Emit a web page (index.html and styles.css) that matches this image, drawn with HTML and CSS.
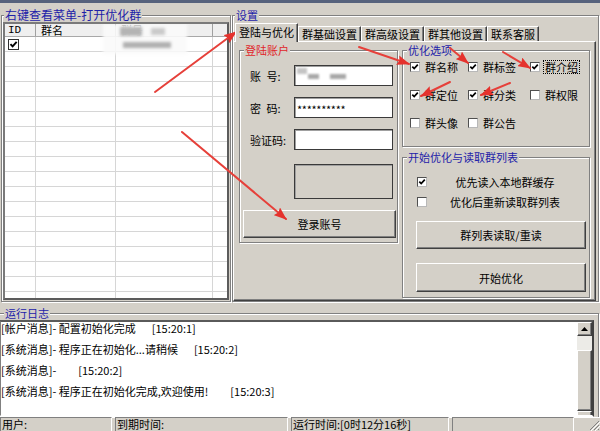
FILE: index.html
```html
<!DOCTYPE html>
<html lang="zh-CN">
<head>
<meta charset="utf-8">
<title>群优化</title>
<link rel="stylesheet" href="styles.css">
</head>
<body>
<div class="app">
  <div class="main">
    <fieldset class="grp left">
      <legend class="lg-big">右键查看菜单-打开优化群</legend>
      <div class="list">
        <div class="lhead">
          <div class="hc mono">ID</div><div class="hc">群名</div><div class="hc">群号</div><div class="hc last"></div>
        </div>
        <div class="lbody">
          <div class="row"><div class="c"><span class="cb big on"><svg viewBox="0 0 8 8"><path d="M1.3 3.6 L3.2 5.6 L6.8 1.6"/></svg></span></div><div class="c"></div><div class="c"></div><div class="c"></div></div>
          <div class="row"><div class="c"></div><div class="c"></div><div class="c"></div><div class="c"></div></div>
          <div class="row"><div class="c"></div><div class="c"></div><div class="c"></div><div class="c"></div></div>
          <div class="row"><div class="c"></div><div class="c"></div><div class="c"></div><div class="c"></div></div>
          <div class="row"><div class="c"></div><div class="c"></div><div class="c"></div><div class="c"></div></div>
          <div class="row"><div class="c"></div><div class="c"></div><div class="c"></div><div class="c"></div></div>
          <div class="row"><div class="c"></div><div class="c"></div><div class="c"></div><div class="c"></div></div>
          <div class="row"><div class="c"></div><div class="c"></div><div class="c"></div><div class="c"></div></div>
          <div class="row"><div class="c"></div><div class="c"></div><div class="c"></div><div class="c"></div></div>
          <div class="row"><div class="c"></div><div class="c"></div><div class="c"></div><div class="c"></div></div>
          <div class="row"><div class="c"></div><div class="c"></div><div class="c"></div><div class="c"></div></div>
          <div class="row"><div class="c"></div><div class="c"></div><div class="c"></div><div class="c"></div></div>
          <div class="row"><div class="c"></div><div class="c"></div><div class="c"></div><div class="c"></div></div>
          <div class="row"><div class="c"></div><div class="c"></div><div class="c"></div><div class="c"></div></div>
          <div class="row"><div class="c"></div><div class="c"></div><div class="c"></div><div class="c"></div></div>
          <div class="row"><div class="c"></div><div class="c"></div><div class="c"></div><div class="c"></div></div>
          <div class="row"><div class="c"></div><div class="c"></div><div class="c"></div><div class="c"></div></div>
          <div class="row"><div class="c"></div><div class="c"></div><div class="c"></div><div class="c"></div></div>
        </div>
        <div class="blur-a"><i class="b1"></i><i class="b2"></i><i class="b3"></i></div>
      </div>
    </fieldset>

    <fieldset class="grp right">
      <legend>设置</legend>
      <div class="tabs">
        <div class="tab active">登陆与优化</div>
        <div class="tab">群基础设置</div>
        <div class="tab">群高级设置</div>
        <div class="tab">群其他设置</div>
        <div class="tab">联系客服</div>
      </div>
      <div class="panel">
        <fieldset class="grp login">
          <legend class="red">登陆账户</legend>
          <div class="frow"><span class="lbl">账&ensp;号:</span><div class="inp"><div class="blur-b"><i class="b1"></i><i class="b2"></i><i class="b3"></i></div></div></div>
          <div class="frow"><span class="lbl">密&ensp;码:</span><div class="inp pw">**********</div></div>
          <div class="frow last"><span class="lbl">验证码:</span><div class="inp"></div></div>
          <div class="captcha"></div>
          <div class="btn login-btn">登录账号</div>
        </fieldset>

        <div class="rcol">
          <fieldset class="grp opts">
            <legend>优化选项</legend>
            <div class="ogrid">
              <div class="ck"><span class="cb on"><svg viewBox="0 0 8 8"><path d="M1.3 3.6 L3.2 5.6 L6.8 1.6"/></svg></span><span>群名称</span></div>
              <div class="ck"><span class="cb on"><svg viewBox="0 0 8 8"><path d="M1.3 3.6 L3.2 5.6 L6.8 1.6"/></svg></span><span>群标签</span></div>
              <div class="ck"><span class="cb on"><svg viewBox="0 0 8 8"><path d="M1.3 3.6 L3.2 5.6 L6.8 1.6"/></svg></span><span class="focus">群介绍</span></div>
              <div class="ck"><span class="cb on"><svg viewBox="0 0 8 8"><path d="M1.3 3.6 L3.2 5.6 L6.8 1.6"/></svg></span><span>群定位</span></div>
              <div class="ck"><span class="cb on"><svg viewBox="0 0 8 8"><path d="M1.3 3.6 L3.2 5.6 L6.8 1.6"/></svg></span><span>群分类</span></div>
              <div class="ck"><span class="cb"></span><span>群权限</span></div>
              <div class="ck"><span class="cb"></span><span>群头像</span></div>
              <div class="ck"><span class="cb"></span><span>群公告</span></div>
            </div>
          </fieldset>

          <fieldset class="grp start">
            <legend>开始优化与读取群列表</legend>
            <div class="ck2"><span class="cb on"><svg viewBox="0 0 8 8"><path d="M1.3 3.6 L3.2 5.6 L6.8 1.6"/></svg></span><span class="t">优先读入本地群缓存</span></div>
            <div class="ck2"><span class="cb"></span><span class="t">优化后重新读取群列表</span></div>
            <div class="btn wide b1">群列表读取/重读</div>
            <div class="btn wide b2">开始优化</div>
          </fieldset>
        </div>
      </div>
    </fieldset>
  </div>

  <fieldset class="grp log">
    <legend>运行日志</legend>
    <div class="logbox">
      <div class="lines">
        <div class="ln">[帐户消息]- 配置初始化完成<span class="ts">[15:20:1]</span></div>
        <div class="ln">[系统消息]- 程序正在初始化...请稍候<span class="ts">[15:20:2]</span></div>
        <div class="ln">[系统消息]-<span class="ts w">[15:20:2]</span></div>
        <div class="ln">[系统消息]- 程序正在初始化完成,欢迎使用!<span class="ts w">[15:20:3]</span></div>
      </div>
      <div class="sbar">
        <div class="sb-btn"><svg viewBox="0 0 7 4"><path d="M3.5 0 L7 4 L0 4 Z"/></svg></div>
        <div class="sb-track"></div>
        <div class="sb-thumb"></div>
        <div class="sb-btn"></div>
      </div>
    </div>
  </fieldset>

  <div class="status">
    <div class="sp s1">用户:</div>
    <div class="sp s2">到期时间:</div>
    <div class="sp s3">运行时间:[0时12分16秒]</div>
    <div class="sp s4"></div>
    <div class="sp grip"><svg viewBox="0 0 12 12"><path d="M11 2 L2 11 M11 6 L6 11 M11 10 L10 11" stroke="#808080"/><path d="M12 3 L3 12 M12 7 L7 12" stroke="#fff"/></svg></div>
  </div>
</div>

<svg class="arrows" viewBox="0 0 600 431" width="600" height="431">
  <defs>
    <marker id="ah" markerUnits="userSpaceOnUse" markerWidth="13" markerHeight="10" refX="12" refY="5" orient="auto">
      <path d="M0 0 L13 5 L0 10 L2 5 Z" fill="#e5322d"/>
    </marker>
  </defs>
  <g stroke="#e6403a" stroke-width="2" fill="none" marker-end="url(#ah)" stroke-linecap="round">
    <line x1="155" y1="92" x2="236" y2="32"/>
    <line x1="182" y1="132" x2="286" y2="219"/>
    <line x1="359" y1="47" x2="409" y2="64"/>
    <line x1="450" y1="48" x2="468" y2="63"/>
    <line x1="503" y1="52" x2="530" y2="68"/>
    <line x1="450" y1="82" x2="421" y2="96"/>
    <line x1="510" y1="83" x2="481" y2="95"/>
  </g>
</svg>
</body>
</html>
```

FILE: styles.css
```css
* { box-sizing: border-box; }
html, body { margin: 0; padding: 0; }
body {
  position: relative;
  width: 600px;
  height: 431px;
  overflow: hidden;
  background: #d4d0c8;
  font-family: "Noto Sans CJK SC", "Noto Sans", sans-serif;
  font-size: 11px;
  line-height: 12px;
  color: #000;
}
.app {
  width: 600px;
  height: 431px;
  display: flex;
  flex-direction: column;
  border-top: 3px solid #56627c;
  overflow: hidden;
}
.main { display: flex; height: 299px; flex: none; }

/* group boxes */
.grp {
  margin: 0;
  padding: 0;
  min-width: 0;
  border: 1px solid #808080;
  box-shadow: inset 1px 1px 0 #fff, 1px 1px 0 #fff;
}
.grp > legend {
  padding: 0 1px;
  height: 12px;
  line-height: 12px;
  font-size: 11px;
  color: #1e22a8;
  background: #d4d0c8;
  white-space: nowrap;
}
.grp > legend.red { color: #e0262a; }
.grp > legend.lg-big { font-size: 12px; }

/* left list group */
.left {
  margin: 6px 0 0 1px;
  width: 230px;
  height: 293px;
  padding: 1px;
}
.left > legend { margin-left: 1px; }
.list {
  position: relative;
  height: 278px;
  background: #fff;
  border: 2px solid;
  border-color: #7a7a7a #5c5c5c #5c5c5c #7a7a7a;
  overflow: hidden;
}
.lhead, .row {
  display: grid;
  grid-template-columns: 31px 80px 97px 1fr;
}
.lhead {
  height: 13px;
  background: #efefef;
  border-bottom: 1px solid #a8a8a8;
}
.hc {
  border-right: 1px solid #a0a0a0;
  padding-left: 5px;
  line-height: 12px;
}
.hc.mono { font-family: "Liberation Mono", monospace; padding-left: 3px; font-size: 11px; }
.hc.last { border-right: 0; }
.row { height: 15px; border-bottom: 1px solid #d6d6d6; }
.c { border-right: 1px solid #d6d6d6; }
.c:last-child { border-right: 0; }
.row .c:first-child { padding: 2px 0 0 3px; }

.blur-a {
  position: absolute;
  left: 98px;
  top: 0;
  width: 84px;
  height: 30px;
  background: rgba(250, 250, 250, 0.9);
  filter: blur(1.6px);
}
.blur-a i, .blur-b i { position: absolute; display: block; }
.blur-a .b1 { left: 17px; top: 3px; width: 22px; height: 9px; background: #b4b4b4; }
.blur-a .b2 { left: 48px; top: 4px; width: 14px; height: 7px; background: #cacaca; }
.blur-a .b3 { left: 20px; top: 18px; width: 48px; height: 6px; background: #b0b0b0; }

/* checkboxes */
.cb {
  display: inline-block;
  flex: none;
  width: 10px;
  height: 10px;
  background: #fff;
  border: 1px solid;
  border-color: #505050 #b8b8b8 #b8b8b8 #505050;
}
.cb.big { width: 11px; height: 11px; border-color: #303030; }
.cb svg { display: block; width: 100%; height: 100%; }
.cb svg path { fill: none; stroke: #000; stroke-width: 1.7; }

/* right settings group */
.right {
  margin: 6px 0 0 1px;
  width: 367px;
  height: 293px;
  padding: 2px 2px 0 0;
}
.right > legend { margin-left: 2px; }
.tabs {
  display: flex;
  align-items: flex-end;
  height: 18px;
  margin-left: 2px;
  position: relative;
  z-index: 1;
}
.tab {
  height: 15px;
  padding: 1px 3px 0;
  line-height: 12px;
  border: 1px solid;
  border-color: #fff #404040 transparent #fff;
  border-bottom: 0;
  box-shadow: inset -1px 0 0 #808080;
  background: #d4d0c8;
  white-space: nowrap;
}
.tab.active {
  height: 19px;
  margin-bottom: -1px;
  padding-top: 2px;
}
.panel {
  height: 260px;
  border: 1px solid;
  border-color: #fff #404040 #404040 #fff;
  box-shadow: inset -1px -1px 0 #808080;
  display: flex;
  align-items: flex-start;
  column-gap: 4px;
  padding: 0 5px;
}

/* login */
.login {
  margin-top: 2px;
  width: 159px;
  height: 199px;
  padding: 9px 1px 3px 3px;
  flex: none;
}
.login > legend { margin-left: 1px; }
.frow {
  display: flex;
  align-items: center;
  height: 21px;
  padding-left: 7px;
  margin-bottom: 11px;
}
.frow.last { margin-bottom: 14px; }
.lbl { width: 44px; flex: none; white-space: nowrap; }
.inp {
  position: relative;
  width: 99px;
  height: 21px;
  background: #fff;
  border: 1px solid #3a3a3a;
  box-shadow: inset 1px 1px 0 #a0a0a0;
  overflow: hidden;
}
.inp.pw { padding: 5px 0 0 2px; font-size: 11px; line-height: 12px; letter-spacing: -0.3px; }
.blur-b { position: absolute; inset: 0; filter: blur(1.2px); }
.blur-b .b1 { left: 2px; top: 2px; width: 10px; height: 6px; background: #c4c4c4; }
.blur-b .b2 { left: 13px; top: 8px; width: 11px; height: 5px; background: #a8a8a8; }
.blur-b .b3 { left: 35px; top: 8px; width: 16px; height: 5px; background: #a8a8a8; }
.captcha {
  margin-left: 51px;
  width: 99px;
  height: 35px;
  border: 1px solid #3a3a3a;
  box-shadow: inset 1px 1px 0 #a0a0a0;
  background: #d4d0c8;
}
.btn {
  display: flex;
  align-items: center;
  justify-content: center;
  height: 28px;
  border: 1px solid;
  border-color: #fff #404040 #404040 #fff;
  box-shadow: inset -1px -1px 0 #808080;
  background: #d4d0c8;
  white-space: nowrap;
}
.login-btn { margin-top: 11px; }

/* right column */
.rcol { width: 188px; flex: none; display: flex; flex-direction: column; }
.opts {
  margin-top: 2px;
  height: 103px;
  padding: 1px 0 0 0;
}
.opts > legend, .start > legend { margin-left: 4px; }
.ogrid {
  margin-left: 7px;
  display: grid;
  grid-template-columns: 58px 62px 1fr;
  grid-auto-rows: 20px;
  row-gap: 8px;
}
.ck { display: flex; align-items: center; gap: 5px; white-space: nowrap; }
.focus { outline: 1px dotted #000; outline-offset: 0; padding: 0 1px; margin-left: -1px; }

.start {
  margin-top: 4px;
  height: 147px;
  padding: 9px 0 0 0;
}
.ck2 {
  display: flex;
  align-items: center;
  height: 20px;
  padding: 0 6px 0 14px;
}
.ck2 .t { flex: 1; text-align: center; white-space: nowrap; }
.btn.wide { margin-left: 13px; width: 170px; }
.btn.b1 { margin-top: 9px; }
.btn.b2 { margin-top: 14px; height: 29px; }

/* log */
.log {
  margin: 5px 0 0 -4px;
  width: 603px;
  height: 110px;
  flex: none;
  padding: 1px 4px 0 2px;
  border-bottom: 0;
}
.log > legend { margin-left: 5px; }
.logbox {
  display: flex;
  height: 97px;
  background: #fff;
  border: 2px solid;
  border-color: #5a5a5a #404040 #fff #808080;
  overflow: hidden;
}
.lines { flex: 1; white-space: nowrap; }
.ln { height: 21px; line-height: 12px; }
.ts { margin-left: 16px; }
.ts.w { margin-left: 22px; }
.sbar {
  width: 15px;
  flex: none;
  display: flex;
  flex-direction: column;
  background: #d4d0c8;
}
.sb-btn {
  height: 14px;
  flex: none;
  border: 1px solid;
  border-color: #fff #404040 #404040 #fff;
  box-shadow: inset -1px -1px 0 #808080;
  display: flex;
  align-items: center;
  justify-content: center;
}
.sb-btn svg { width: 7px; height: 4px; display: block; }
.sb-btn svg path { fill: #000; }
.sb-track { height: 14px; flex: none; background: #ecebe7; }
.sb-thumb {
  height: 61px;
  flex: none;
  border: 1px solid;
  border-color: #fff #404040 #404040 #fff;
  box-shadow: inset -1px -1px 0 #808080;
}

/* status bar */
.status { display: flex; gap: 3px; height: 14px; flex: none; }
.sp {
  height: 14px;
  border: 1px solid;
  border-color: #808080 #fff #fff #808080;
  border-bottom: 0;
  padding: 0 0 0 1px;
  font-size: 11px;
  line-height: 13px;
  white-space: nowrap;
}
.s1 { width: 112px; }
.s2 { width: 173px; }
.s3 { width: 158px; }
.s4 { width: 122px; }
.grip { flex: 1; position: relative; border: 0; padding: 0; }
.grip svg { position: absolute; right: 0; bottom: 0; width: 12px; height: 12px; }

/* annotation arrows */
.arrows { position: absolute; left: 0; top: 0; pointer-events: none; }
```
